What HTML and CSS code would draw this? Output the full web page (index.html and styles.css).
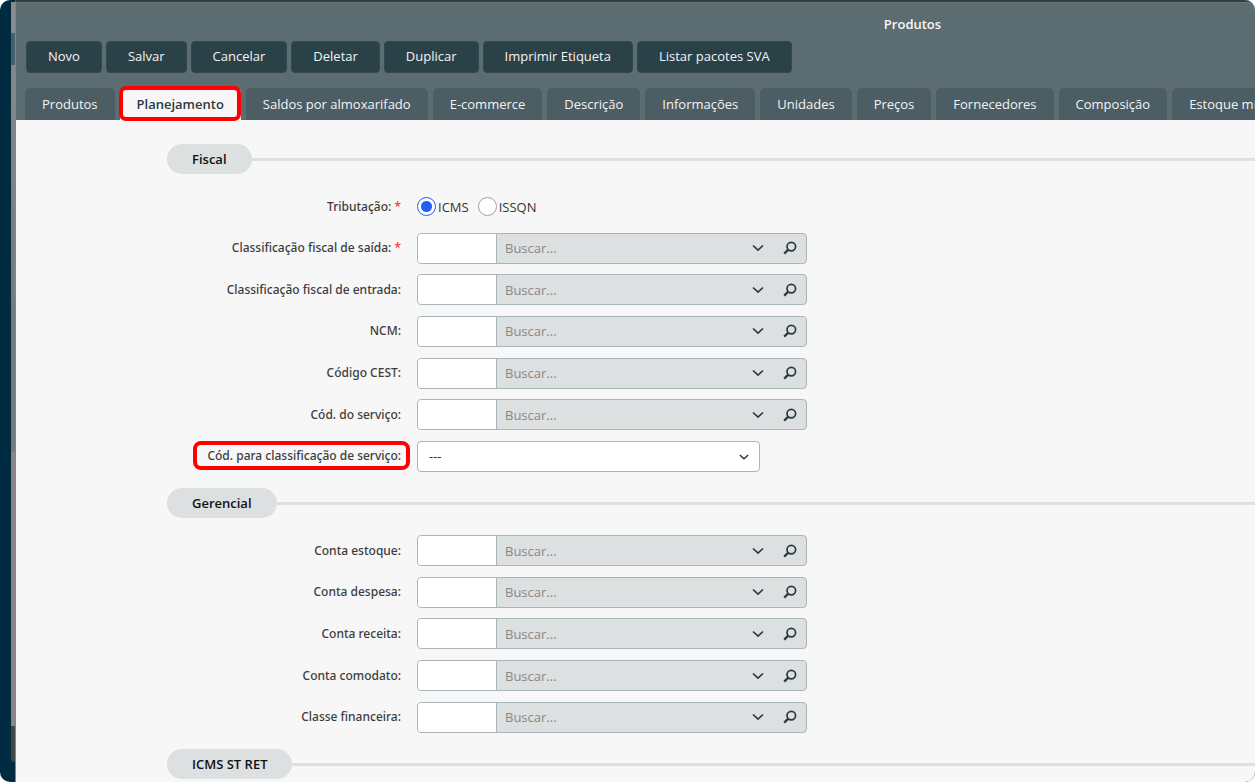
FILE: index.html
```html
<!DOCTYPE html>
<html lang="pt-BR">
<head>
<meta charset="utf-8">
<title>Produtos</title>
<link rel="stylesheet" href="styles.css">
</head>
<body>
<svg class="sprite" aria-hidden="true">
  <symbol id="chevron" viewBox="0 0 12 8"><path d="M1 1.5 6 6.2 11 1.5" fill="none" stroke="currentColor" stroke-width="1.7"/></symbol>
  <symbol id="search" viewBox="0 0 14 14"><circle cx="8.3" cy="5.6" r="4.3" fill="none" stroke="currentColor" stroke-width="1.7"/><path d="M5.3 8.6 1.2 12.6" fill="none" stroke="currentColor" stroke-width="2.2"/></symbol>
</svg>
<div class="app">
  <div class="rail"></div>
  <div class="rail-edge"></div>
  <div class="window">
    <header class="header">
      <h1 class="title">Produtos</h1>
      <div class="toolbar">
        <button class="btn" type="button">Novo</button>
        <button class="btn" type="button">Salvar</button>
        <button class="btn" type="button">Cancelar</button>
        <button class="btn" type="button">Deletar</button>
        <button class="btn" type="button">Duplicar</button>
        <button class="btn" type="button">Imprimir Etiqueta</button>
        <button class="btn" type="button">Listar pacotes SVA</button>
      </div>
      <nav class="tabs">
        <a class="tab" href="#">Produtos</a>
        <a class="tab tab-active" href="#">Planejamento</a>
        <a class="tab" href="#">Saldos por almoxarifado</a>
        <a class="tab" href="#">E-commerce</a>
        <a class="tab" href="#">Descrição</a>
        <a class="tab" href="#">Informações</a>
        <a class="tab" href="#">Unidades</a>
        <a class="tab" href="#">Preços</a>
        <a class="tab" href="#">Fornecedores</a>
        <a class="tab" href="#">Composição</a>
        <a class="tab" href="#">Estoque mínimo</a>
      </nav>
    </header>
    <main class="content">
      <h2 class="section"><span class="pill">Fiscal</span></h2>
      <div class="fields fields-fiscal">
        <div class="row" role="radiogroup" aria-labelledby="trib">
          <span class="label" id="trib">Tributação: <span class="req">*</span></span>
          <div class="radios">
            <label class="choice"><input class="radio" type="radio" name="trib" checked>ICMS</label>
            <label class="choice"><input class="radio" type="radio" name="trib">ISSQN</label>
          </div>
        </div>
        <div class="row">
          <label class="label" for="saida">Classificação fiscal de saída: <span class="req">*</span></label>
          <div class="lookup"><input class="code" id="saida" type="text"><input class="query" type="text" placeholder="Buscar..." aria-label="Buscar classificação fiscal de saída"><button class="icon-btn" type="button" aria-label="Abrir"><svg class="chevron"><use href="#chevron"/></svg></button><button class="icon-btn" type="button" aria-label="Pesquisar"><svg class="search"><use href="#search"/></svg></button></div>
        </div>
        <div class="row">
          <label class="label" for="entrada">Classificação fiscal de entrada:</label>
          <div class="lookup"><input class="code" id="entrada" type="text"><input class="query" type="text" placeholder="Buscar..." aria-label="Buscar classificação fiscal de entrada"><button class="icon-btn" type="button" aria-label="Abrir"><svg class="chevron"><use href="#chevron"/></svg></button><button class="icon-btn" type="button" aria-label="Pesquisar"><svg class="search"><use href="#search"/></svg></button></div>
        </div>
        <div class="row">
          <label class="label" for="ncm">NCM:</label>
          <div class="lookup"><input class="code" id="ncm" type="text"><input class="query" type="text" placeholder="Buscar..." aria-label="Buscar NCM"><button class="icon-btn" type="button" aria-label="Abrir"><svg class="chevron"><use href="#chevron"/></svg></button><button class="icon-btn" type="button" aria-label="Pesquisar"><svg class="search"><use href="#search"/></svg></button></div>
        </div>
        <div class="row">
          <label class="label" for="cest">Código CEST:</label>
          <div class="lookup"><input class="code" id="cest" type="text"><input class="query" type="text" placeholder="Buscar..." aria-label="Buscar código CEST"><button class="icon-btn" type="button" aria-label="Abrir"><svg class="chevron"><use href="#chevron"/></svg></button><button class="icon-btn" type="button" aria-label="Pesquisar"><svg class="search"><use href="#search"/></svg></button></div>
        </div>
        <div class="row">
          <label class="label" for="servico">Cód. do serviço:</label>
          <div class="lookup"><input class="code" id="servico" type="text"><input class="query" type="text" placeholder="Buscar..." aria-label="Buscar serviço"><button class="icon-btn" type="button" aria-label="Abrir"><svg class="chevron"><use href="#chevron"/></svg></button><button class="icon-btn" type="button" aria-label="Pesquisar"><svg class="search"><use href="#search"/></svg></button></div>
        </div>
        <div class="row">
          <label class="label" for="classe-servico"><span class="marked">Cód. para classificação de serviço:</span></label>
          <div class="select-wrap"><select class="select" id="classe-servico"><option>---</option></select><svg class="chevron select-arrow"><use href="#chevron"/></svg></div>
        </div>
      </div>

      <h2 class="section"><span class="pill">Gerencial</span></h2>
      <div class="fields fields-gerencial">
        <div class="row">
          <label class="label" for="estoque">Conta estoque:</label>
          <div class="lookup"><input class="code" id="estoque" type="text"><input class="query" type="text" placeholder="Buscar..." aria-label="Buscar conta estoque"><button class="icon-btn" type="button" aria-label="Abrir"><svg class="chevron"><use href="#chevron"/></svg></button><button class="icon-btn" type="button" aria-label="Pesquisar"><svg class="search"><use href="#search"/></svg></button></div>
        </div>
        <div class="row">
          <label class="label" for="despesa">Conta despesa:</label>
          <div class="lookup"><input class="code" id="despesa" type="text"><input class="query" type="text" placeholder="Buscar..." aria-label="Buscar conta despesa"><button class="icon-btn" type="button" aria-label="Abrir"><svg class="chevron"><use href="#chevron"/></svg></button><button class="icon-btn" type="button" aria-label="Pesquisar"><svg class="search"><use href="#search"/></svg></button></div>
        </div>
        <div class="row">
          <label class="label" for="receita">Conta receita:</label>
          <div class="lookup"><input class="code" id="receita" type="text"><input class="query" type="text" placeholder="Buscar..." aria-label="Buscar conta receita"><button class="icon-btn" type="button" aria-label="Abrir"><svg class="chevron"><use href="#chevron"/></svg></button><button class="icon-btn" type="button" aria-label="Pesquisar"><svg class="search"><use href="#search"/></svg></button></div>
        </div>
        <div class="row">
          <label class="label" for="comodato">Conta comodato:</label>
          <div class="lookup"><input class="code" id="comodato" type="text"><input class="query" type="text" placeholder="Buscar..." aria-label="Buscar conta comodato"><button class="icon-btn" type="button" aria-label="Abrir"><svg class="chevron"><use href="#chevron"/></svg></button><button class="icon-btn" type="button" aria-label="Pesquisar"><svg class="search"><use href="#search"/></svg></button></div>
        </div>
        <div class="row">
          <label class="label" for="financeira">Classe financeira:</label>
          <div class="lookup"><input class="code" id="financeira" type="text"><input class="query" type="text" placeholder="Buscar..." aria-label="Buscar classe financeira"><button class="icon-btn" type="button" aria-label="Abrir"><svg class="chevron"><use href="#chevron"/></svg></button><button class="icon-btn" type="button" aria-label="Pesquisar"><svg class="search"><use href="#search"/></svg></button></div>
        </div>
      </div>

      <h2 class="section"><span class="pill">ICMS ST RET</span></h2>
    </main>
  </div>
</div>
</body>
</html>
```
FILE: styles.css
```css
* { box-sizing: border-box; }

body {
  margin: 0;
  background: #fff;
  color: #333;
  font-family: "Open Sans", "Noto Sans", sans-serif;
  font-size: 13px;
  line-height: 16px;
}

input, button, select { font: inherit; }

.sprite { position: absolute; width: 0; height: 0; }

.app {
  display: flex;
  height: 100vh;
  overflow: hidden;
  border-radius: 10px;
  background: #002b40;
}

.rail { flex: 0 0 11px; }

.rail-edge {
  flex: 0 0 4px;
  margin: 2px 0 20px;
  border-radius: 0 0 0 4px;
  background: linear-gradient(#8b8b8f 0 31px, #44616f 31px 63px, #858588 63px 100px, #6f7b80 320px, #6f7b80 450px, #8b8587 450px calc(100% - 36px), #404848 calc(100% - 36px));
}

.window {
  flex: 1;
  min-width: 0;
  border-top: 2px solid #363f40;
  border-left: 1px solid #778b90;
  background: #f7f7f7;
}

.header {
  padding: 13px 0 0 10px;
  background: #5c6d71;
  border-top: 1px solid #66777b;
}

.title {
  margin: 0 0 9px;
  padding-left: 544px;
  color: #f7f7f7;
  font-size: 13px;
  font-weight: 600;
  line-height: 16px;
  text-align: center;
}

.toolbar { display: flex; gap: 4px; margin-bottom: 15px; }

.btn {
  height: 32px;
  padding: 0 21px 2px;
  border: 1px solid #34494f;
  border-radius: 4px;
  background: #2b4148;
  color: #f2f4f4;
  font-weight: 500;
  white-space: nowrap;
}

.tabs { display: flex; gap: 5px; margin-left: -1px; }

.tab {
  position: relative;
  flex: none;
  padding: 8px 17px;
  border-radius: 5px 5px 0 0;
  background: #4d5d64;
  color: #f2f4f4;
  font-weight: 500;
  text-decoration: none;
  white-space: nowrap;
}

.tab-active {
  background: #f7f7f7;
  color: #2b3a40;
  font-weight: 600;
}

.tab-active::after {
  content: "";
  position: absolute;
  inset: -2px 0 -1px -1px;
  border: 4px solid #f00;
  border-radius: 7px;
}

.content { padding: 24px 0 0 151px; }

.section {
  display: flex;
  align-items: center;
  margin: 0;
  font-size: 13px;
  font-weight: 600;
  color: #111;
}

.section::after {
  content: "";
  flex: 1;
  height: 3px;
  background: #dce0e1;
}

.pill {
  padding: 7px 25px;
  border-radius: 15px;
  background: #dce0e1;
}

.fields { display: grid; grid-auto-rows: 1fr; }
.fields-fiscal { min-height: 291px; margin: 12px 0 11px; }
.fields-gerencial { min-height: 208px; margin: 12px 0 11px; }

.row {
  display: grid;
  grid-template-columns: 234px minmax(0, 390px);
  align-items: center;
  gap: 16px;
}

.label {
  color: #3c3c3c;
  font-family: "Noto Sans", sans-serif;
  font-size: 12px;
  font-weight: 500;
  text-align: right;
  white-space: nowrap;
}

.req { color: #f33; }

.marked { position: relative; }

.marked::after {
  content: "";
  position: absolute;
  inset: -6px -9px -6px -14px;
  border: 4px solid #f00;
  border-radius: 8px;
}

.radios { display: flex; gap: 9px; }
.choice { display: flex; align-items: center; gap: 2px; }

.radio {
  appearance: none;
  width: 19px;
  height: 19px;
  margin: 0;
  border: 1px solid #9aa5a9;
  border-radius: 50%;
  background: #fff;
}

.radio:checked {
  border-color: #245cf5;
  background: radial-gradient(circle, #245cf5 0 5px, #fff 6px);
}

.lookup {
  display: flex;
  height: 31px;
  overflow: hidden;
  border: 1px solid #abb5b9;
  border-radius: 4px;
  background: #dce0e1;
}

.code {
  width: 79px;
  border: 0;
  border-right: 1px solid #abb5b9;
  background: #fff;
}

.query {
  flex: 1;
  min-width: 0;
  padding: 0 8px;
  border: 0;
  background: transparent;
}

.query::placeholder { color: #888; opacity: 1; }

.icon-btn {
  display: grid;
  place-items: center;
  width: 32px;
  padding: 0;
  border: 0;
  background: transparent;
  color: #2b3a40;
}

.chevron { width: 12px; height: 8px; }
.search { width: 14px; height: 14px; }

.select-wrap { position: relative; width: 343px; max-width: 100%; }

.select {
  appearance: none;
  display: block;
  width: 100%;
  height: 31px;
  padding: 0 11px;
  border: 1px solid #abb5b9;
  border-radius: 4px;
  background: #fff;
  color: #333;
}

.select-arrow {
  position: absolute;
  top: 12px;
  right: 11px;
  width: 10px;
  pointer-events: none;
}
```
